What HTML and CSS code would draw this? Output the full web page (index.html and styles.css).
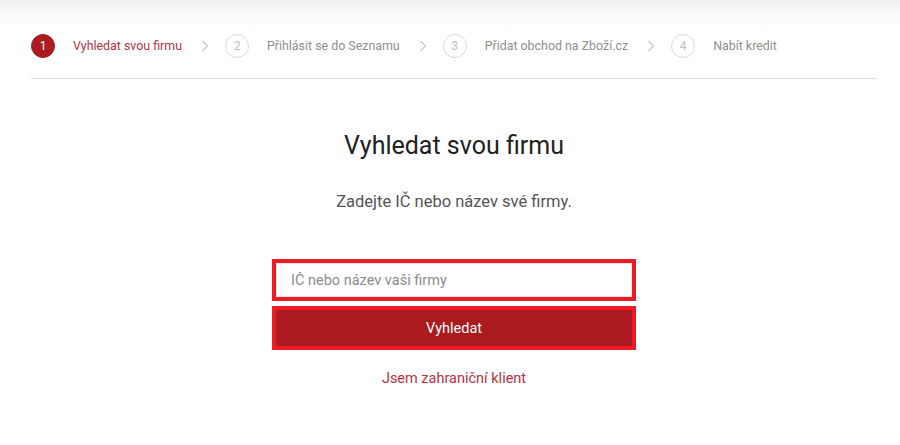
FILE: index.html
```html
<!DOCTYPE html>
<html lang="cs">
<head>
<meta charset="utf-8">
<title>Vyhledat svou firmu</title>
<link rel="stylesheet" href="styles.css">
</head>
<body>
<div class="page">
  <nav class="steps">
    <div class="step active"><span class="num">1</span><span class="label">Vyhledat svou firmu</span></div>
    <span class="chev"><svg width="8" height="12" viewBox="0 0 8 12"><path d="M1.5 1 L6.5 6 L1.5 11" fill="none" stroke="#c8c8c8" stroke-width="1.2"/></svg></span>
    <div class="step"><span class="num">2</span><span class="label">Přihlásit se do Seznamu</span></div>
    <span class="chev"><svg width="8" height="12" viewBox="0 0 8 12"><path d="M1.5 1 L6.5 6 L1.5 11" fill="none" stroke="#c8c8c8" stroke-width="1.2"/></svg></span>
    <div class="step"><span class="num">3</span><span class="label">Přidat obchod na Zboží.cz</span></div>
    <span class="chev"><svg width="8" height="12" viewBox="0 0 8 12"><path d="M1.5 1 L6.5 6 L1.5 11" fill="none" stroke="#c8c8c8" stroke-width="1.2"/></svg></span>
    <div class="step"><span class="num">4</span><span class="label">Nabít kredit</span></div>
  </nav>
  <main class="content">
    <h1 class="title">Vyhledat svou firmu</h1>
    <p class="subtitle">Zadejte IČ nebo název své firmy.</p>
    <form class="form">
      <div class="field"><input class="input" type="text" placeholder="IČ nebo název vaši firmy"></div>
      <div class="btnwrap"><button class="btn" type="button">Vyhledat</button></div>
    </form>
    <a class="link" href="#">Jsem zahraniční klient</a>
  </main>
</div>
</body>
</html>
```
FILE: styles.css
```css
html, body {
  margin: 0;
  padding: 0;
  background: #fff;
}
body {
  font-family: Roboto, "Liberation Sans", sans-serif;
  background: linear-gradient(to bottom, #f1f1f1 0px, #fafafa 14px, #ffffff 30px) no-repeat;
  background-size: 100% 30px;
  height: 445px;
  overflow: hidden;
}
.page {
  padding: 0 23px 0 31px;
}
.steps {
  display: flex;
  align-items: center;
  height: 79px;
  box-sizing: border-box;
  border-bottom: 1px solid #dedede;
  padding-top: 22px;
  padding-bottom: 9px;
}
.step {
  display: flex;
  align-items: center;
}
.num {
  width: 22px;
  height: 22px;
  border-radius: 50%;
  border: 1px solid #d9d9d9;
  color: #bdbdbd;
  font-size: 12px;
  display: flex;
  align-items: center;
  justify-content: center;
  box-sizing: content-box;
}
.label {
  margin-left: 18px;
  font-size: 12.4px;
  color: #8f8f8f;
}
.step.active .num {
  background: #a81c22;
  border-color: #a81c22;
  color: #fff;
}
.step.active .label {
  color: #b8323f;
}
.chev {
  display: flex;
  align-items: center;
  margin: 0 16px 0 19px;
}
.content {
  display: flex;
  flex-direction: column;
  align-items: center;
}
.title {
  margin: 53px 0 0;
  font-size: 25px;
  font-weight: 400;
  line-height: 28px;
  color: #222;
}
.subtitle {
  margin: 32px 0 0;
  font-size: 16.5px;
  line-height: 20px;
  color: #555;
}
.form {
  margin-top: 47px;
  width: 364px;
  display: flex;
  flex-direction: column;
  gap: 5px;
}
.field {
  border: 4px solid #ec1c26;
  height: 42px;
  box-sizing: border-box;
  display: flex;
}
.input {
  flex: 1;
  border: 1px solid #e4e4e4;
  margin: 0;
  padding: 0 0 0 14px;
  font-family: Roboto, "Liberation Sans", sans-serif;
  font-size: 14.5px;
  color: #333;
  outline: none;
}
.input::placeholder {
  color: #8c8c8c;
}
.btnwrap {
  border: 4px solid #ec1c26;
  height: 44px;
  box-sizing: border-box;
  display: flex;
}
.btn {
  flex: 1;
  border: 0;
  margin: 0;
  background: #ab1a1d;
  color: #fff;
  font-family: Roboto, "Liberation Sans", sans-serif;
  font-size: 14.5px;
  cursor: pointer;
}
.link {
  margin-top: 19px;
  font-size: 14.5px;
  line-height: 20px;
  color: #b8323f;
  text-decoration: none;
}
```
